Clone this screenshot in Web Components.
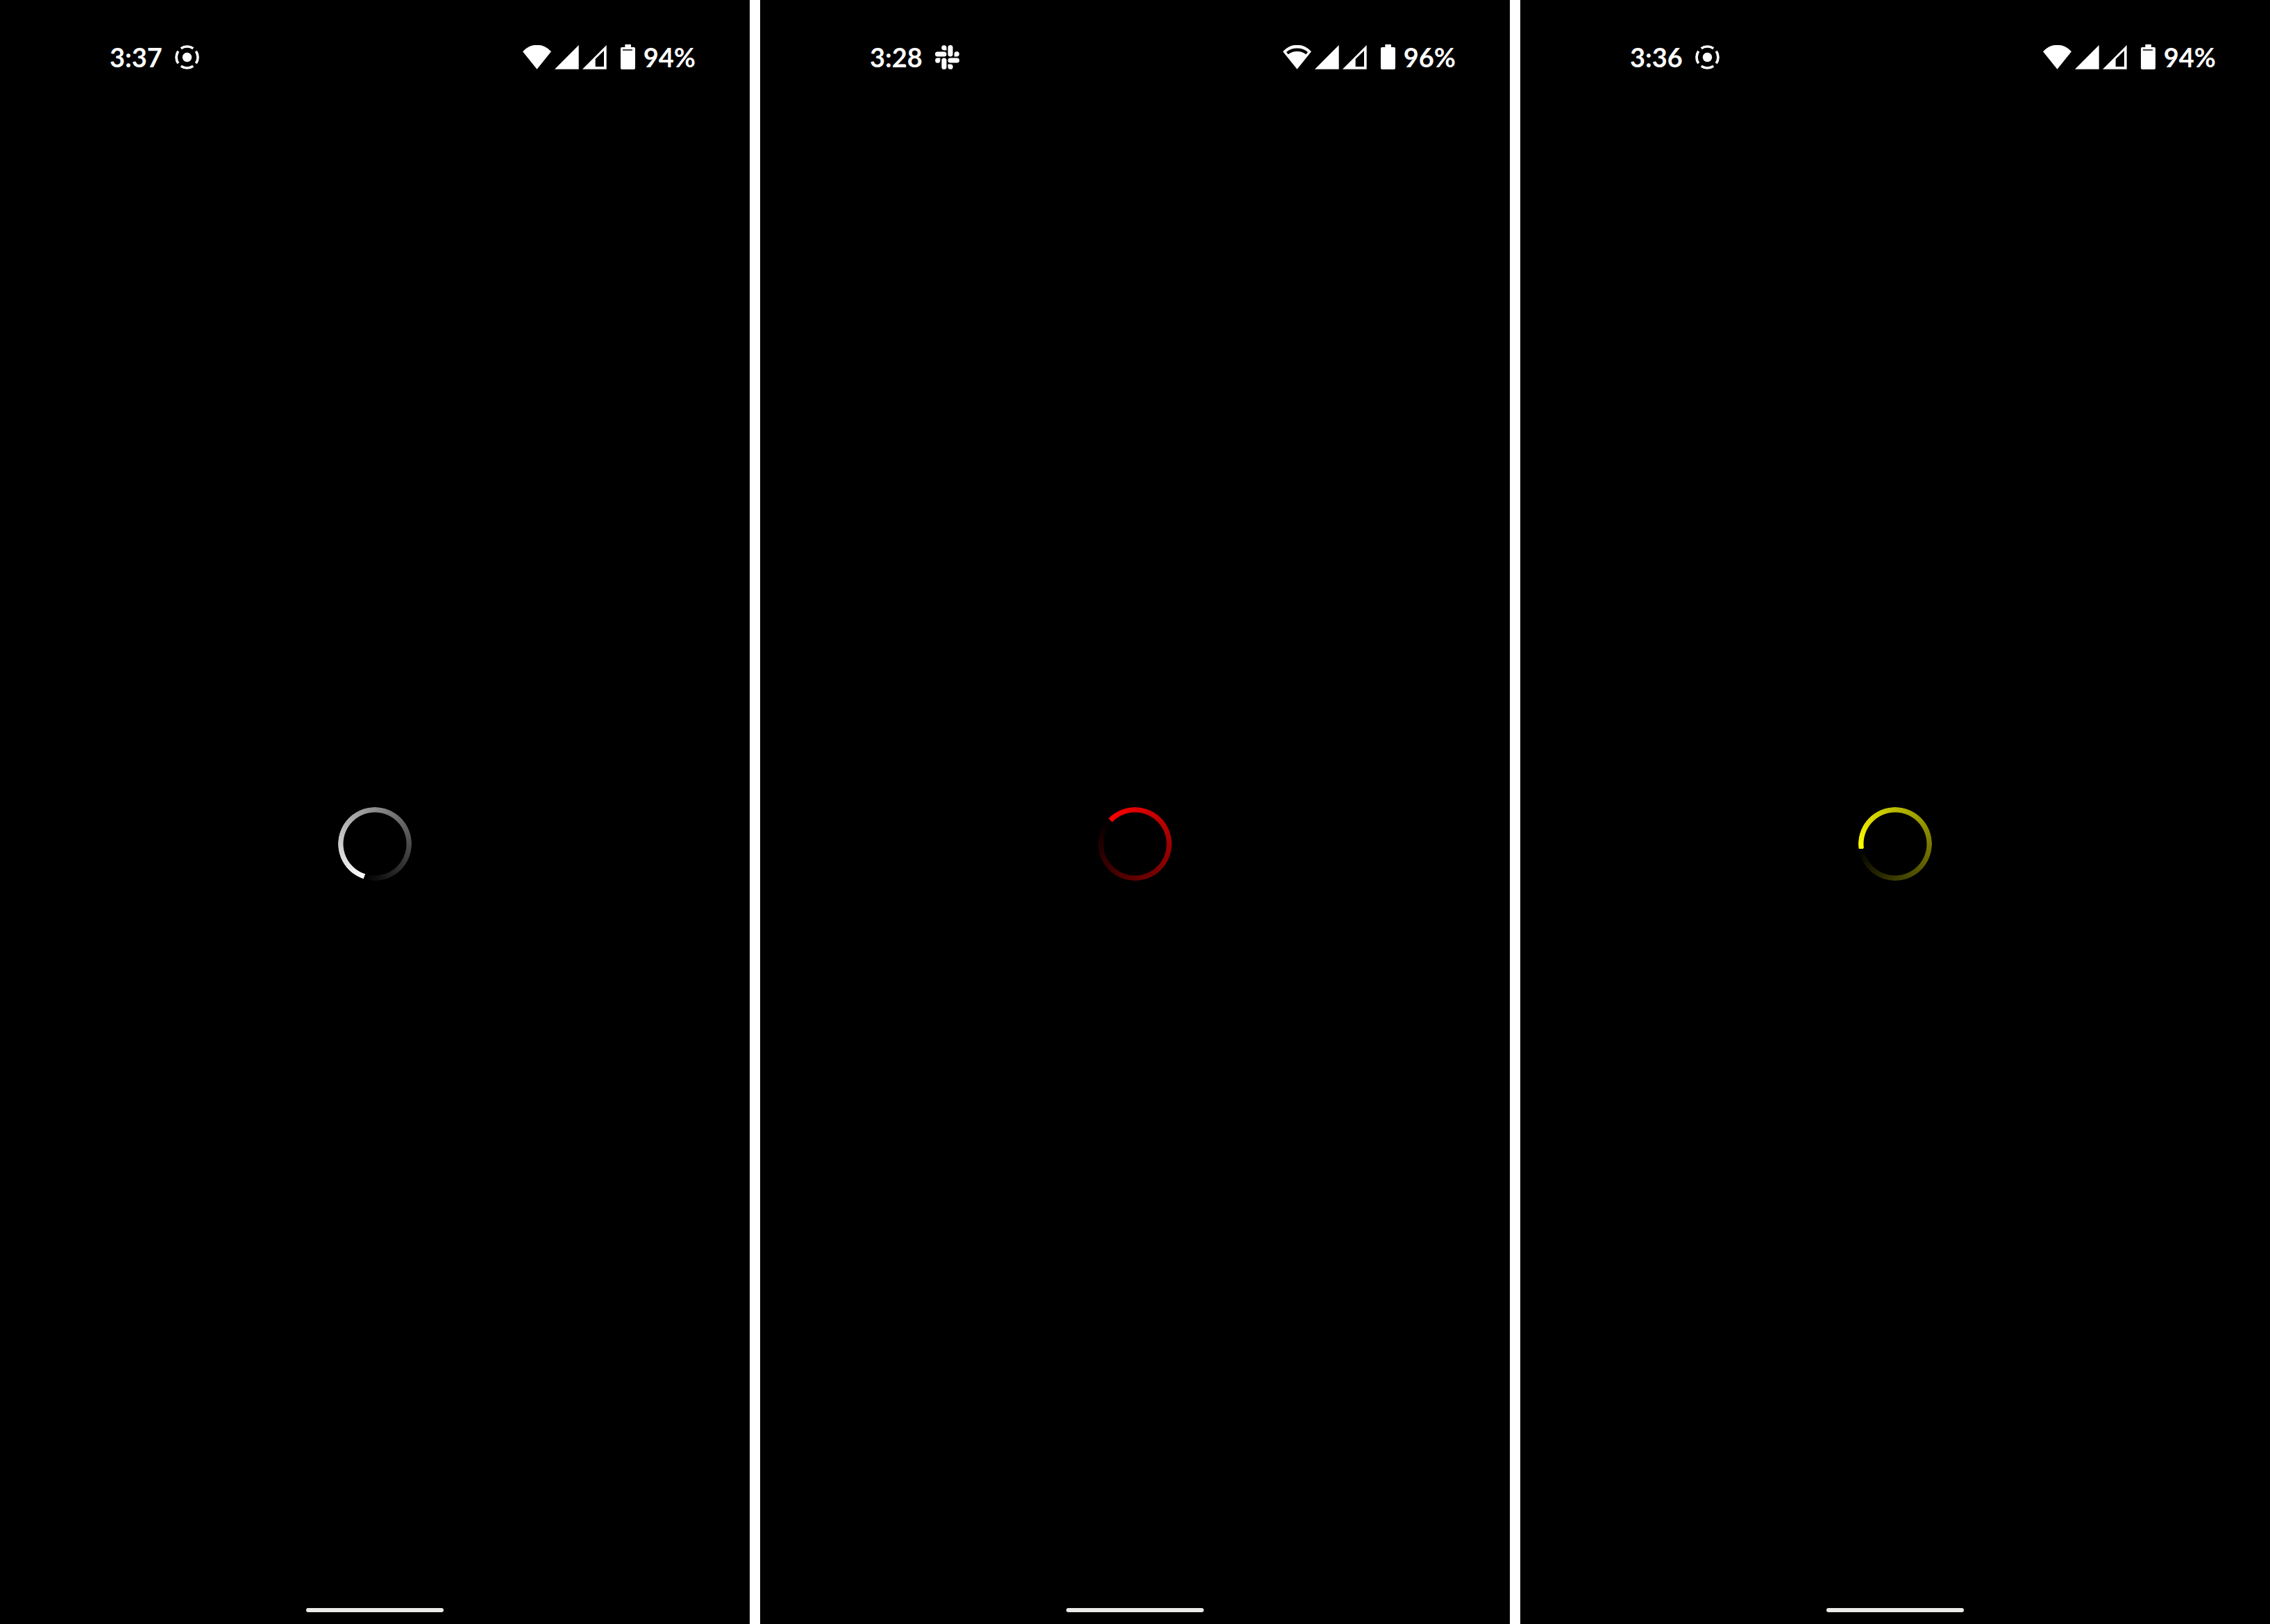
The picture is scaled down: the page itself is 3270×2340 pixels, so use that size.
<!DOCTYPE html>
<html lang="en">
<head>
<meta charset="utf-8">
<title>Loading screens</title>
<style>
  html, body { height: 100%; margin: 0; background: #fff; }
</style>
</head>
<body>
<screen-gallery>
  <phone-screen time="3:37" battery="94" notice="record" wifi="full" style="--spin-color:#fff;--spin-from:198deg"></phone-screen>
  <phone-screen time="3:28" battery="96" notice="slack" wifi="weak" style="--spin-color:#f00;--spin-from:314deg"></phone-screen>
  <phone-screen time="3:36" battery="94" notice="record" wifi="full" style="--spin-color:#ff0;--spin-from:262deg"></phone-screen>
</screen-gallery>
<script>
// Icon shapes; each entry is [viewBox width, viewBox height, drawn width, drawn height, markup]
const ICONS = {
  record: [104, 104, 35, 35, `<circle cx="52" cy="52" r="20"/>
    <g fill="none" stroke="currentColor" stroke-width="11">
      <path d="M26 14A46 46 0 0 1 78 14"/><path d="M90 26A46 46 0 0 1 90 78"/>
      <path d="M78 90A46 46 0 0 1 26 90"/><path d="M14 78A46 46 0 0 1 14 26"/></g>`],
  slack: [104, 104, 35, 35, `<rect x="0" y="28" width="49" height="21" rx="10.5"/>
    <rect x="55" y="0" width="21" height="49" rx="10.5"/>
    <rect x="55" y="55" width="49" height="21" rx="10.5"/>
    <rect x="28" y="55" width="21" height="49" rx="10.5"/>
    <path d="M49 22H38.500A10.750 10.750 0 1 1 49 11Z"/>
    <path d="M82 49V38.500A10.750 10.750 0 1 1 93 49Z"/>
    <path d="M55 82H65.500A10.750 10.750 0 1 1 55 93Z"/>
    <path d="M22 55V65.500A10.750 10.750 0 1 1 11 55Z"/>`],
  wifiFull: [123, 105, 41, 35, `<path d="M61.500 104L0 28A80 80 0 0 1 123 28Z"/>`],
  wifiWeak: [123, 105, 41, 35, `<path fill-rule="evenodd" d="M61.500 104L0 28A80 80 0 0 1 123 28ZM15 30L23 40A64 64 0 0 1 100 40L108 30A74 74 0 0 0 15 30Z"/>`],
  signal: [105, 105, 35, 35, `<path d="M0 104L104 0V104Z"/>`],
  signalWeak: [105, 105, 35, 35, `<path fill-rule="evenodd" d="M0 104L104 0V104ZM56 60L93 24V93H56Z"/>`],
  battery94: [63, 108, 21, 36, `<path d="M19 0H45V12H57Q63 12 63 18V102Q63 108 57 108H6Q0 108 0 102V18Q0 12 6 12H19Z"/><path fill="#444" d="M9 21H51V27H9Z"/>`],
  battery96: [63, 108, 21, 36, `<path d="M19 0H45V12H57Q63 12 63 18V102Q63 108 57 108H6Q0 108 0 102V18Q0 12 6 12H19Z"/>`]
};

class StatusIcon extends HTMLElement {
  connectedCallback() {
    const [vw, vh, w, h, shapes] = ICONS[this.getAttribute('name')];
    this.attachShadow({ mode: 'open' }).innerHTML = `
      <style>:host{display:block;flex:none} svg{display:block}</style>
      <svg viewBox="0 0 ${vw} ${vh}" width="${w}" height="${h}" fill="currentColor" aria-hidden="true">${shapes}</svg>`;
  }
}

class StatusBar extends HTMLElement {
  connectedCallback() {
    const level = this.getAttribute('battery');
    const wifi = this.getAttribute('wifi') === 'full' ? 'wifiFull' : 'wifiWeak';
    this.attachShadow({ mode: 'open' }).innerHTML = `
      <style>
        :host{display:flex;justify-content:space-between;align-items:center;
          height:136px;padding:28px 78px 0 158px;box-sizing:border-box;
          font:700 38px/48px Lato,"Open Sans",sans-serif;color:#fff}
        div{display:flex;align-items:center}
        .left{gap:18px}
        .network{gap:5px;margin-right:20px}
        .power{gap:12px}
      </style>
      <div class="left"><time>${this.getAttribute('time')}</time><status-icon name="${this.getAttribute('notice')}"></status-icon></div>
      <div>
        <div class="network"><status-icon name="${wifi}"></status-icon><status-icon name="signal"></status-icon><status-icon name="signalWeak"></status-icon></div>
        <div class="power"><status-icon name="battery${level}"></status-icon><span>${level}%</span></div>
      </div>`;
  }
}

class LoadingSpinner extends HTMLElement {
  connectedCallback() {
    this.attachShadow({ mode: 'open' }).innerHTML = `
      <style>
        :host{display:block}
        div{width:106px;height:106px;border-radius:50%;
          background:conic-gradient(from var(--spin-from),var(--spin-color),#000);
          -webkit-mask:radial-gradient(circle,transparent 45px,#000 46px);
          mask:radial-gradient(circle,transparent 45px,#000 46px)}
      </style>
      <div role="progressbar" aria-label="Loading"></div>`;
  }
}

class HomeBar extends HTMLElement {
  connectedCallback() {
    this.attachShadow({ mode: 'open' }).innerHTML = `
      <style>
        :host{display:flex;justify-content:center;padding:21px 0 17px}
        button{display:block;width:198px;height:6px;padding:0;border:0;border-radius:3px;background:#ebebe9}
      </style>
      <button type="button" aria-label="Home"></button>`;
  }
}

class PhoneScreen extends HTMLElement {
  connectedCallback() {
    const get = name => this.getAttribute(name);
    this.attachShadow({ mode: 'open' }).innerHTML = `
      <style>
        :host{display:flex;flex-direction:column;flex:1;min-width:0;background:#000}
        main{flex:1;display:flex;align-items:center;justify-content:center}
      </style>
      <status-bar time="${get('time')}" battery="${get('battery')}" notice="${get('notice')}" wifi="${get('wifi')}"></status-bar>
      <main><loading-spinner></loading-spinner></main>
      <home-bar></home-bar>`;
  }
}

class ScreenGallery extends HTMLElement {
  connectedCallback() {
    this.attachShadow({ mode: 'open' }).innerHTML = `
      <style>:host{display:flex;gap:15px;min-height:100%}</style><slot></slot>`;
  }
}

customElements.define('status-icon', StatusIcon);
customElements.define('status-bar', StatusBar);
customElements.define('loading-spinner', LoadingSpinner);
customElements.define('home-bar', HomeBar);
customElements.define('phone-screen', PhoneScreen);
customElements.define('screen-gallery', ScreenGallery);
</script>
</body>
</html>
